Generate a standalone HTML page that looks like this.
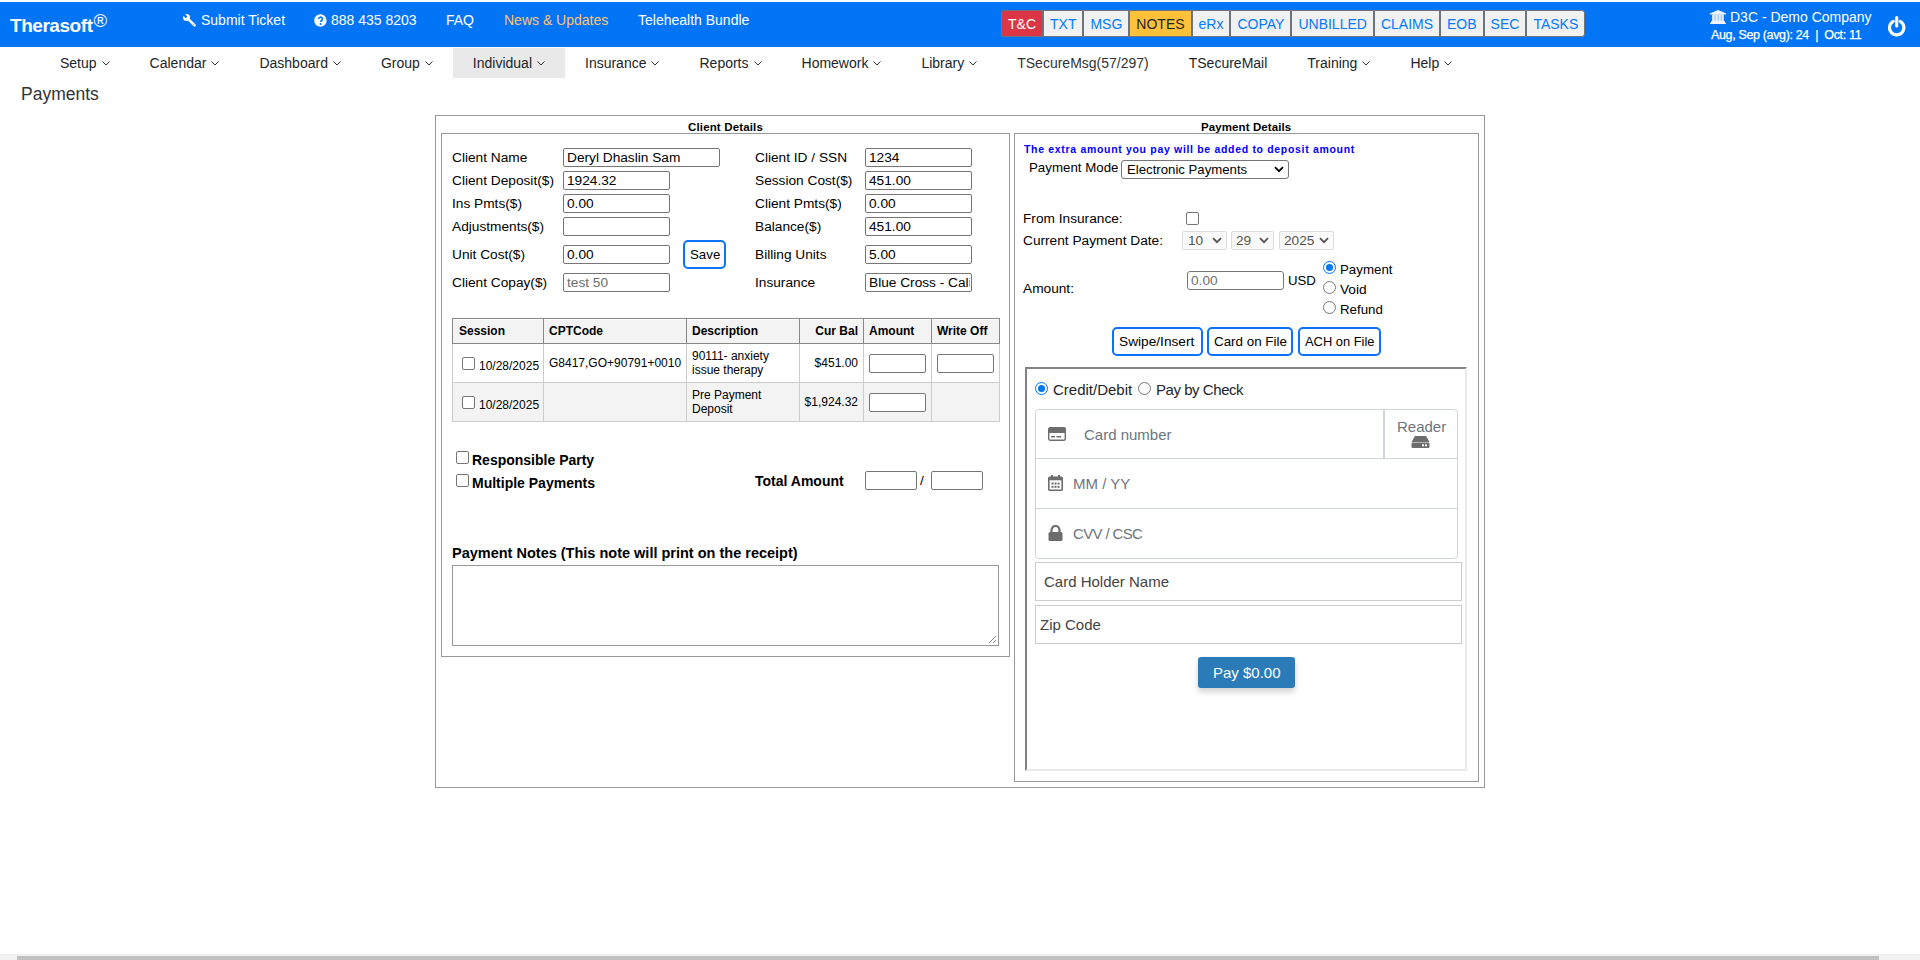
<!DOCTYPE html>
<html><head><meta charset="utf-8"><title>Payments</title>
<style>
html,body{margin:0;padding:0;background:#fff;width:1920px;height:960px;overflow:hidden;position:relative;font-family:"Liberation Sans",sans-serif;color:#000}
.a{position:absolute;white-space:nowrap;line-height:1}
.hdr{position:absolute;left:0;top:2px;width:1920px;height:45px;background:#0275f7}
.w{color:#fff}
.btng{position:absolute;top:10px;height:27px;display:flex}
.btn{box-sizing:border-box;height:27px;border:1px solid #6c757d;padding:0 6px;font-size:14px;line-height:26.5px;color:#007bff;background:#f1f1f1}
.btn+.btn{border-left:1px solid #6c757d}
.nav{position:absolute;left:40px;top:48px;height:30px;display:flex}
.ni{box-sizing:border-box;height:30px;padding:0 20px;font-size:14px;line-height:30px;color:#212529;white-space:nowrap}
.ni.on{background:#e9e9e9}
.chev{display:inline-block;width:8px;height:5px;margin-left:5px;vertical-align:2px}
.box{position:absolute;border:1px solid #999;box-sizing:border-box}
.inp{position:absolute;box-sizing:border-box;border:1px solid #767676;border-radius:2px;background:#fff}
.cb{position:absolute;box-sizing:border-box;width:13px;height:13px;border:1px solid #767676;border-radius:2px;background:#fff}
.rd{position:absolute;box-sizing:border-box;width:13px;height:13px;border:1px solid #767676;border-radius:50%;background:#fff}
.rd.on{border:1.3px solid #0075ff}
.rd.on::after{content:"";position:absolute;left:1.7px;top:1.7px;width:7px;height:7px;border-radius:50%;background:#0075ff}
.f{font-size:13.7px}
.fb{font-size:14px;font-weight:bold}
.ob{position:absolute;box-sizing:border-box;border:2px solid #0b72fa;border-radius:5px;background:#fff}
</style></head><body>

<!-- HEADER -->
<div class="hdr"></div>
<div class="a w" style="left:10px;top:16px;font-size:19px;font-weight:bold;letter-spacing:-0.45px">Therasoft</div>
<div class="a w" style="left:93.5px;top:12px;font-size:18.5px">&#174;</div>

<svg class="a" style="left:178px;top:8px" width="22" height="22" viewBox="0 0 22 22"><circle cx="8.6" cy="9.4" r="3.5" fill="#fff"/><path d="M9.8 10.6 16.6 17.4" stroke="#fff" stroke-width="2.7" stroke-linecap="round"/><path d="M4.6 5.6 7.9 8.7" stroke="#0275f7" stroke-width="2.3" stroke-linecap="round"/><circle cx="15.5" cy="16.4" r=".55" fill="#8fb8f5"/></svg>
<div class="a w" style="left:201px;top:13px;font-size:14px">Submit Ticket</div>
<svg class="a" style="left:314px;top:13.6px" width="13" height="13" viewBox="0 0 13 13"><circle cx="6.4" cy="6.5" r="6.2" fill="#fff"/><path d="M4.6 5.1a1.9 1.9 0 1 1 2.8 1.6c-.6.35-.8.6-.8 1.25" stroke="#0275f7" stroke-width="1.6" fill="none"/><circle cx="6.6" cy="10" r="1.05" fill="#0275f7"/></svg>
<div class="a w" style="left:331px;top:13px;font-size:14px">888 435 8203</div>
<div class="a w" style="left:446px;top:13px;font-size:14px">FAQ</div>
<div class="a" style="left:504px;top:13px;font-size:14px;color:#ffc46b">News &amp; Updates</div>
<div class="a w" style="left:638px;top:13px;font-size:14px">Telehealth Bundle</div>

<div class="btng" style="left:1001px">
<div class="btn" style="background:#dc3545;color:#fff;border-radius:3px 0 0 3px">T&amp;C</div>
<div class="btn">TXT</div>
<div class="btn">MSG</div>
<div class="btn" style="background:#ffc13a;color:#212529">NOTES</div>
<div class="btn">eRx</div>
<div class="btn">COPAY</div>
<div class="btn">UNBILLED</div>
<div class="btn">CLAIMS</div>
<div class="btn">EOB</div>
<div class="btn">SEC</div>
<div class="btn" style="border-radius:0 3px 3px 0">TASKS</div>
</div>

<svg class="a" style="left:1705px;top:6px" width="26" height="22" viewBox="0 0 26 22"><path d="M13 4 21.2 7.6V8.4H4.8V7.6z" fill="#eef3fd"/><path d="M7.1 8.3h11.7v6.8H7.1z" fill="#e6eefc"/><path d="M9.6 9.2h.9v5.4h-.9zM12.8 9.2h.9v5.4h-.9zM15.8 9.2h.9v5.4h-.9z" fill="#7fb6f9"/><path d="M6.5 15h13l1.6 3H4.9z" fill="#eef3fd"/></svg>
<div class="a w" style="left:1730px;top:10px;font-size:14px">D3C - Demo Company</div>
<div class="a w" style="left:1711px;top:29px;font-size:12.5px;letter-spacing:-0.35px;-webkit-text-stroke:0.25px #fff">Aug, Sep (avg): 24 &nbsp;|&nbsp; Oct: 11</div>
<svg class="a" style="left:1886px;top:15px" width="22" height="22" viewBox="0 0 22 22"><path d="M7.3 6.3A7.2 7.2 0 1 0 14.1 6.3" stroke="#fff" stroke-width="3.1" fill="none" stroke-linecap="round"/><path d="M10.7 2.6v8.4" stroke="#fff" stroke-width="3.1" stroke-linecap="round"/></svg>

<!-- NAV -->
<div class="nav">
<div class="ni">Setup<svg class="chev" viewBox="0 0 8 5"><path d="M.5.5 4 4 7.5.5" stroke="#212529" stroke-width="0.95" fill="none"/></svg></div>
<div class="ni">Calendar<svg class="chev" viewBox="0 0 8 5"><path d="M.5.5 4 4 7.5.5" stroke="#212529" stroke-width="0.95" fill="none"/></svg></div>
<div class="ni">Dashboard<svg class="chev" viewBox="0 0 8 5"><path d="M.5.5 4 4 7.5.5" stroke="#212529" stroke-width="0.95" fill="none"/></svg></div>
<div class="ni">Group<svg class="chev" viewBox="0 0 8 5"><path d="M.5.5 4 4 7.5.5" stroke="#212529" stroke-width="0.95" fill="none"/></svg></div>
<div class="ni on">Individual<svg class="chev" viewBox="0 0 8 5"><path d="M.5.5 4 4 7.5.5" stroke="#212529" stroke-width="0.95" fill="none"/></svg></div>
<div class="ni">Insurance<svg class="chev" viewBox="0 0 8 5"><path d="M.5.5 4 4 7.5.5" stroke="#212529" stroke-width="0.95" fill="none"/></svg></div>
<div class="ni">Reports<svg class="chev" viewBox="0 0 8 5"><path d="M.5.5 4 4 7.5.5" stroke="#212529" stroke-width="0.95" fill="none"/></svg></div>
<div class="ni">Homework<svg class="chev" viewBox="0 0 8 5"><path d="M.5.5 4 4 7.5.5" stroke="#212529" stroke-width="0.95" fill="none"/></svg></div>
<div class="ni">Library<svg class="chev" viewBox="0 0 8 5"><path d="M.5.5 4 4 7.5.5" stroke="#212529" stroke-width="0.95" fill="none"/></svg></div>
<div class="ni" style="color:#333">TSecureMsg(57/297)</div>
<div class="ni">TSecureMail</div>
<div class="ni">Training<svg class="chev" viewBox="0 0 8 5"><path d="M.5.5 4 4 7.5.5" stroke="#212529" stroke-width="0.95" fill="none"/></svg></div>
<div class="ni">Help<svg class="chev" viewBox="0 0 8 5"><path d="M.5.5 4 4 7.5.5" stroke="#212529" stroke-width="0.95" fill="none"/></svg></div>
</div>

<div class="a" style="left:21px;top:86px;font-size:17.5px;color:#333">Payments</div>

<!-- MAIN -->

<div class="box" style="left:435px;top:115px;width:1050px;height:673px"></div>
<div class="box" style="left:441px;top:133px;width:569px;height:524px"></div>
<div class="box" style="left:1014px;top:133px;width:465px;height:649px"></div>
<div class="a" style="left:688px;top:121.5px;font-size:11.5px;font-weight:bold;letter-spacing:0.15px">Client Details</div>
<div class="a" style="left:1201px;top:121.5px;font-size:11.5px;font-weight:bold;letter-spacing:0.1px">Payment Details</div>

<!-- client details left -->
<div class="a f" style="left:452px;top:151px">Client Name</div>
<div class="a f" style="left:452px;top:174px">Client Deposit($)</div>
<div class="a f" style="left:452px;top:197px">Ins Pmts($)</div>
<div class="a f" style="left:452px;top:220px">Adjustments($)</div>
<div class="a f" style="left:452px;top:248px">Unit Cost($)</div>
<div class="a f" style="left:452px;top:276px">Client Copay($)</div>

<div class="inp" style="left:563px;top:148px;width:157px;height:19px"></div>
<div class="inp" style="left:563px;top:171px;width:107px;height:19px"></div>
<div class="inp" style="left:563px;top:194px;width:107px;height:19px"></div>
<div class="inp" style="left:563px;top:217px;width:107px;height:19px"></div>
<div class="inp" style="left:563px;top:245px;width:107px;height:19px"></div>
<div class="inp" style="left:563px;top:273px;width:107px;height:19px"></div>
<div class="a f" style="left:567px;top:151px">Deryl Dhaslin Sam</div>
<div class="a f" style="left:567px;top:174px">1924.32</div>
<div class="a f" style="left:567px;top:197px">0.00</div>
<div class="a f" style="left:567px;top:248px">0.00</div>
<div class="a f" style="left:567px;top:276px;color:#6d6d6d">test 50</div>
<div class="ob" style="left:683px;top:240px;width:43px;height:29px"></div>
<div class="a f" style="left:690px;top:248px;font-size:13.3px">Save</div>

<!-- client details right -->
<div class="a f" style="left:755px;top:151px">Client ID / SSN</div>
<div class="a f" style="left:755px;top:174px">Session Cost($)</div>
<div class="a f" style="left:755px;top:197px">Client Pmts($)</div>
<div class="a f" style="left:755px;top:220px">Balance($)</div>
<div class="a f" style="left:755px;top:248px">Billing Units</div>
<div class="a f" style="left:755px;top:276px">Insurance</div>
<div class="inp" style="left:865px;top:148px;width:107px;height:19px"></div>
<div class="inp" style="left:865px;top:171px;width:107px;height:19px"></div>
<div class="inp" style="left:865px;top:194px;width:107px;height:19px"></div>
<div class="inp" style="left:865px;top:217px;width:107px;height:19px"></div>
<div class="inp" style="left:865px;top:245px;width:107px;height:19px"></div>
<div class="inp" style="left:865px;top:273px;width:107px;height:19px;overflow:hidden"></div>
<div class="a f" style="left:869px;top:151px">1234</div>
<div class="a f" style="left:869px;top:174px">451.00</div>
<div class="a f" style="left:869px;top:197px">0.00</div>
<div class="a f" style="left:869px;top:220px">451.00</div>
<div class="a f" style="left:869px;top:248px">5.00</div>
<div class="a f" style="left:869px;top:276px;width:101px;overflow:hidden">Blue Cross - California</div>

<!-- table -->
<div style="position:absolute;left:452px;top:318px;width:548px;height:104px;box-sizing:border-box;border:1px solid #ccc;background:#fff"></div>
<div style="position:absolute;left:452px;top:318px;width:548px;height:26px;box-sizing:border-box;border:1px solid #888;background:#f3f3f3;box-shadow:inset 0 1px 0 #fff"></div>
<div style="position:absolute;left:453px;top:383px;width:546px;height:38px;background:#f3f3f3"></div>
<div style="position:absolute;left:453px;top:382px;width:546px;height:1px;background:#ccc"></div>
<div style="position:absolute;left:543px;top:319px;width:1px;height:24px;background:#888"></div>
<div style="position:absolute;left:686px;top:319px;width:1px;height:24px;background:#888"></div>
<div style="position:absolute;left:799px;top:319px;width:1px;height:24px;background:#888"></div>
<div style="position:absolute;left:863px;top:319px;width:1px;height:24px;background:#888"></div>
<div style="position:absolute;left:931px;top:319px;width:1px;height:24px;background:#888"></div>
<div style="position:absolute;left:543px;top:344px;width:1px;height:77px;background:#ccc"></div>
<div style="position:absolute;left:686px;top:344px;width:1px;height:77px;background:#ccc"></div>
<div style="position:absolute;left:799px;top:344px;width:1px;height:77px;background:#ccc"></div>
<div style="position:absolute;left:863px;top:344px;width:1px;height:77px;background:#ccc"></div>
<div style="position:absolute;left:931px;top:344px;width:1px;height:77px;background:#ccc"></div>
<div class="a" style="left:459px;top:325px;font-size:12px;font-weight:bold">Session</div>
<div class="a" style="left:549px;top:325px;font-size:12px;font-weight:bold">CPTCode</div>
<div class="a" style="left:692px;top:325px;font-size:12px;font-weight:bold">Description</div>
<div class="a" style="left:800px;top:325px;width:58px;text-align:right;font-size:12px;font-weight:bold">Cur Bal</div>
<div class="a" style="left:869px;top:325px;font-size:12px;font-weight:bold">Amount</div>
<div class="a" style="left:937px;top:325px;font-size:12px;font-weight:bold">Write Off</div>

<div class="cb" style="left:462px;top:357px"></div>
<div class="a" style="left:479px;top:360px;font-size:12px">10/28/2025</div>
<div class="a" style="left:549px;top:357px;font-size:12px">G8417,GO+90791+0010</div>
<div class="a" style="left:692px;top:350px;font-size:12px">90111- anxiety</div>
<div class="a" style="left:692px;top:364px;font-size:12px">issue therapy</div>
<div class="a" style="left:800px;top:357px;width:58px;text-align:right;font-size:12px">$451.00</div>
<div class="inp" style="left:869px;top:354px;width:57px;height:19px"></div>
<div class="inp" style="left:937px;top:354px;width:57px;height:19px"></div>

<div class="cb" style="left:462px;top:396px"></div>
<div class="a" style="left:479px;top:399px;font-size:12px">10/28/2025</div>
<div class="a" style="left:692px;top:389px;font-size:12px">Pre Payment</div>
<div class="a" style="left:692px;top:403px;font-size:12px">Deposit</div>
<div class="a" style="left:790px;top:396px;width:68px;text-align:right;font-size:12px">$1,924.32</div>
<div class="inp" style="left:869px;top:393px;width:57px;height:19px"></div>

<div class="cb" style="left:456px;top:451px"></div>
<div class="a fb" style="left:472px;top:453px">Responsible Party</div>
<div class="cb" style="left:456px;top:474px"></div>
<div class="a fb" style="left:472px;top:476px">Multiple Payments</div>
<div class="a fb" style="left:755px;top:474px">Total Amount</div>
<div class="inp" style="left:865px;top:471px;width:52px;height:19px"></div>
<div class="a f" style="left:920px;top:474px">/</div>
<div class="inp" style="left:931px;top:471px;width:52px;height:19px"></div>

<div class="a fb" style="left:452px;top:546px;font-size:14.5px">Payment Notes (This note will print on the receipt)</div>
<div class="inp" style="left:452px;top:565px;width:547px;height:81px;border-color:#999;border-radius:0"></div>
<svg class="a" style="left:987px;top:634px" width="10" height="10" viewBox="0 0 10 10"><path d="M9 2 2 9M9 6 6 9" stroke="#888" stroke-width="1"/></svg>


<!-- payment details -->
<div class="a" style="left:1024px;top:144px;font-size:10.5px;font-weight:bold;color:#0000ff;letter-spacing:0.68px">The extra amount you pay will be added to deposit amount</div>
<div class="a f" style="left:1029px;top:161px;font-size:13.3px">Payment Mode</div>
<div class="inp" style="left:1121px;top:160px;width:168px;height:19px;border-radius:3px"></div>
<div class="a f" style="left:1127px;top:163px;font-size:13.2px">Electronic Payments</div>
<svg class="a" style="left:1274px;top:166px" width="10" height="7" viewBox="0 0 10 7"><path d="M1 1.2 5 5.2 9 1.2" stroke="#000" stroke-width="1.8" fill="none"/></svg>

<div class="a f" style="left:1023px;top:212px">From Insurance:</div>
<div class="cb" style="left:1186px;top:212px"></div>
<div class="a f" style="left:1023px;top:234px">Current Payment Date:</div>
<div class="inp" style="left:1182px;top:231px;width:45px;height:19px;border-color:#dcdcdc;background:#fafafa"></div>
<div class="inp" style="left:1231px;top:231px;width:43px;height:19px;border-color:#dcdcdc;background:#fafafa"></div>
<div class="inp" style="left:1279px;top:231px;width:55px;height:19px;border-color:#dcdcdc;background:#fafafa"></div>
<div class="a f" style="left:1188px;top:234px;color:#555">10</div>
<div class="a f" style="left:1236px;top:234px;color:#555">29</div>
<div class="a f" style="left:1284px;top:234px;color:#555">2025</div>
<svg class="a" style="left:1212px;top:237px" width="10" height="7" viewBox="0 0 10 7"><path d="M1 1.2 5 5.2 9 1.2" stroke="#555" stroke-width="1.8" fill="none"/></svg>
<svg class="a" style="left:1259px;top:237px" width="10" height="7" viewBox="0 0 10 7"><path d="M1 1.2 5 5.2 9 1.2" stroke="#555" stroke-width="1.8" fill="none"/></svg>
<svg class="a" style="left:1319px;top:237px" width="10" height="7" viewBox="0 0 10 7"><path d="M1 1.2 5 5.2 9 1.2" stroke="#555" stroke-width="1.8" fill="none"/></svg>

<div class="a f" style="left:1023px;top:282px">Amount:</div>
<div class="inp" style="left:1187px;top:271px;width:97px;height:19px;border-radius:3px"></div>
<div class="a f" style="left:1191px;top:274px;color:#707070">0.00</div>
<div class="a f" style="left:1288px;top:274px;font-size:13.2px">USD</div>
<div class="rd on" style="left:1323px;top:261px"></div>
<div class="a f" style="left:1340px;top:263px;font-size:13.3px">Payment</div>
<div class="rd" style="left:1323px;top:281px"></div>
<div class="a f" style="left:1340px;top:283px">Void</div>
<div class="rd" style="left:1323px;top:301px"></div>
<div class="a f" style="left:1340px;top:303px;font-size:13.3px">Refund</div>

<div class="ob" style="left:1112px;top:327px;width:91px;height:29px"></div>
<div class="ob" style="left:1207px;top:327px;width:86px;height:29px"></div>
<div class="ob" style="left:1298px;top:327px;width:83px;height:29px"></div>
<div class="a f" style="left:1119px;top:335px">Swipe/Insert</div>
<div class="a f" style="left:1214px;top:335px;font-size:13.4px">Card on File</div>
<div class="a f" style="left:1305px;top:336px;font-size:12.9px">ACH on File</div>

<!-- iframe -->
<div style="position:absolute;left:1025px;top:367px;width:442px;height:404px;box-sizing:border-box;border:2px solid;border-color:#828282 #eaeaea #eaeaea #828282;background:#fff"></div>
<div class="rd on" style="left:1035px;top:382px"></div>
<div class="a" style="left:1053px;top:382px;font-size:15px;color:#212529">Credit/Debit</div>
<div class="rd" style="left:1138px;top:382px"></div>
<div class="a" style="left:1156px;top:382px;font-size:15px;color:#212529;letter-spacing:-0.45px">Pay by Check</div>

<div style="position:absolute;left:1035px;top:409px;width:423px;height:150px;box-sizing:border-box;border:1px solid #ced4da;border-radius:4px"></div>
<div style="position:absolute;left:1036px;top:458px;width:421px;height:1px;background:#ced4da"></div>
<div style="position:absolute;left:1036px;top:508px;width:421px;height:1px;background:#ced4da"></div>
<div style="position:absolute;left:1383px;top:410px;width:2px;height:48px;background:#ced4da"></div>
<svg class="a" style="left:1048px;top:427px" width="18" height="14" viewBox="0 0 18 14"><rect x="0.7" y="0.7" width="16.6" height="12.6" rx="1.5" fill="#fff" stroke="#6d6d6d" stroke-width="1.4"/><rect x="0.7" y="0.7" width="16.6" height="5.3" fill="#6d6d6d"/><rect x="3" y="9" width="4" height="1.5" fill="#6d6d6d"/><rect x="8.5" y="9" width="4.5" height="1.5" fill="#6d6d6d"/></svg>
<div class="a" style="left:1084px;top:427px;font-size:15px;color:#6c757d">Card number</div>
<div class="a" style="left:1397px;top:419px;font-size:15px;color:#6c757d">Reader</div>
<svg class="a" style="left:1411px;top:436px" width="19" height="12" viewBox="0 0 19 12"><path d="M4 0H15L18.5 6H0.5z" fill="#6d6d6d"/><rect x="0.5" y="6.5" width="18" height="5.5" rx="1.2" fill="#6d6d6d"/><rect x="11" y="8.3" width="2" height="2" fill="#fff"/><rect x="14" y="8.3" width="2" height="2" fill="#fff"/></svg>
<svg class="a" style="left:1048px;top:475px" width="15" height="16" viewBox="0 0 15 16"><rect x="3" y="0" width="2" height="4" fill="#6d6d6d"/><rect x="10" y="0" width="2" height="4" fill="#6d6d6d"/><rect x="0.8" y="2.3" width="13.4" height="13" rx="1" fill="none" stroke="#6d6d6d" stroke-width="1.6"/><rect x="0.8" y="2.3" width="13.4" height="3" fill="#6d6d6d"/><g fill="#6d6d6d"><rect x="3.5" y="7.5" width="2" height="2"/><rect x="6.5" y="7.5" width="2" height="2"/><rect x="9.5" y="7.5" width="2" height="2"/><rect x="3.5" y="10.8" width="2" height="2"/><rect x="6.5" y="10.8" width="2" height="2"/><rect x="9.5" y="10.8" width="2" height="2"/></g></svg>
<div class="a" style="left:1073px;top:476px;font-size:15px;color:#6c757d">MM / YY</div>
<svg class="a" style="left:1048px;top:525px" width="15" height="16" viewBox="0 0 15 16"><path d="M3.5 7V5a4 4 0 0 1 8 0v2" stroke="#6d6d6d" stroke-width="2.2" fill="none"/><rect x="0.5" y="7" width="14" height="9" rx="1.5" fill="#6d6d6d"/></svg>
<div class="a" style="left:1073px;top:526px;font-size:15px;color:#6c757d;letter-spacing:-0.65px">CVV / CSC</div>

<div style="position:absolute;left:1035px;top:562px;width:427px;height:39px;box-sizing:border-box;border:1px solid #ccc"></div>
<div class="a" style="left:1044px;top:574px;font-size:15px;color:#444">Card Holder Name</div>
<div style="position:absolute;left:1035px;top:605px;width:427px;height:39px;box-sizing:border-box;border:1px solid #ccc"></div>
<div class="a" style="left:1040px;top:617px;font-size:15px;color:#444">Zip Code</div>
<div style="position:absolute;left:1198px;top:657px;width:97px;height:31px;background:#2b7bb9;border-radius:3px;box-shadow:0 4px 6px rgba(0,0,0,.18)"></div>
<div class="a" style="left:1213px;top:665px;font-size:15px;color:#fff">Pay $0.00</div>


<!-- scrollbar -->
<div style="position:absolute;left:8px;top:958px;width:3px;height:2px;background:#505050"></div>
<div style="position:absolute;left:1909px;top:958px;width:3px;height:2px;background:#505050"></div>
<div style="position:absolute;left:0;top:954px;width:1920px;height:6px;background:#f1f1f1"></div>
<div style="position:absolute;left:17px;top:956px;width:1862px;height:4px;background:#c1c1c1"></div>
</body></html>
